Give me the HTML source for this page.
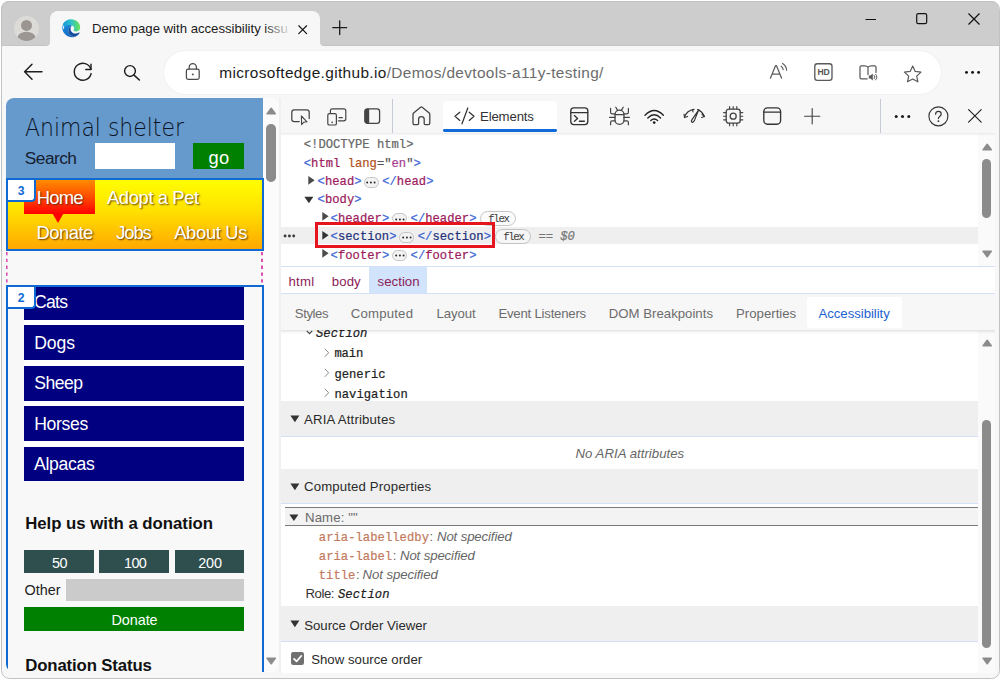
<!DOCTYPE html>
<html lang="en">
<head>
<meta charset="utf-8">
<title>Demo page with accessibility issues</title>
<style>
html,body{margin:0;padding:0;}
body{width:1000px;height:679px;overflow:hidden;background:#fff;position:relative;font-family:"Liberation Sans",sans-serif;}
.a{position:absolute;}
.t{position:absolute;white-space:pre;line-height:normal;}
svg{position:absolute;overflow:visible;}
.t.m{-webkit-text-stroke:0.22px;}
#win{position:absolute;left:1px;top:1px;width:998px;height:677px;border-radius:8px;overflow:hidden;background:#f7f7f7;}
#g{position:absolute;left:-1px;top:-1px;width:1000px;height:679px;}
#winborder{position:absolute;left:0.5px;top:0.5px;width:997px;height:676px;border-radius:8.5px;border:1.1px solid #c2c2c2;pointer-events:none;}
.ic{fill:none;stroke:#1f1f1f;stroke-width:1.3;stroke-linecap:round;stroke-linejoin:round;}
.pill{position:absolute;border:1px solid #c4c4c4;border-radius:7px;background:#f3f3f3;box-sizing:border-box;}
.hdr{position:absolute;left:281.2px;width:696.8px;background:#efefef;}
.bl{position:absolute;left:281.2px;height:1px;background:#d3e1f8;}
.navy{position:absolute;left:24px;width:220.2px;height:34.8px;background:#000080;}
.dsg{position:absolute;background:#2f4f4f;top:550.4px;height:23px;}
</style>
</head>
<body>
<div id="win"><div id="g">

<!-- ======= tab strip ======= -->
<div class="a" id="tabstrip" style="left:0;top:0;width:1000px;height:45.8px;background:#cdcdcd;box-shadow:inset 0 -1px 0 #c4c4c4;"></div>
<!-- active tab -->
<div class="a" style="left:50px;top:10.5px;width:269.5px;height:36px;background:#f7f7f7;border-radius:8px 8px 0 0;"></div>
<svg style="left:46px;top:41.8px" width="4" height="4"><path d="M4 0V4H0A4 4 0 0 0 4 0Z" fill="#f7f7f7"/></svg>
<svg style="left:319.5px;top:41.8px" width="4" height="4"><path d="M0 0V4H4A4 4 0 0 1 0 0Z" fill="#f7f7f7"/></svg>
<!-- avatar -->
<svg style="left:13.9px;top:16.1px" width="25" height="25" viewBox="0 0 25 25">
 <defs><clipPath id="avc"><circle cx="12.5" cy="12.5" r="12.5"/></clipPath></defs>
 <circle cx="12.5" cy="12.5" r="12.5" fill="#dddbd8"/>
 <g clip-path="url(#avc)"><circle cx="12.5" cy="9.4" r="5.5" fill="#9b9692"/><ellipse cx="12.5" cy="21.4" rx="8.9" ry="5.6" fill="#9b9692"/></g>
</svg>
<!-- edge logo -->
<svg style="left:62.3px;top:19.2px" width="18.4" height="18.4" viewBox="0 0 20 20">
 <defs>
  <linearGradient id="eg1" x1="0.1" y1="0.35" x2="0.95" y2="0.3"><stop offset="0" stop-color="#1e9fd8"/><stop offset="0.45" stop-color="#2fc2c9"/><stop offset="1" stop-color="#67e15a"/></linearGradient>
  <linearGradient id="eg2" x1="0.2" y1="0.2" x2="0.6" y2="1"><stop offset="0" stop-color="#1b86d9"/><stop offset="1" stop-color="#1565c0"/></linearGradient>
 </defs>
 <path d="M10 0.3C15.6 0.3 19.9 4.4 19.8 9.4C19.7 12 17.6 13.6 15 13.6C13 13.6 12.3 12.9 12.6 12.3C13.2 11.4 13.4 10.6 13.2 9.6C12.8 7.8 11.2 6.7 9.4 6.8C6.6 7 4.6 9.2 4.5 12C2 9 0.9 7 1 5.2C2.8 2.2 6.2 0.3 10 0.3Z" fill="url(#eg1)"/>
 <path d="M1 5.2C-0.6 9 0.2 13.6 3.3 16.7C6.5 19.9 11 20.6 14.3 19.2C10.5 19.4 7.2 16.6 6.9 13.2C6.7 10.4 8.4 8.2 10.6 7C7 5.8 2.6 7.6 1.6 11.4C0.9 9.4 0.6 7.2 1 5.2Z" fill="url(#eg2)"/>
 <path d="M6.9 13.2C7.2 16.6 10.5 19.4 14.3 19.2C16.4 18.4 18.1 17 19 15.4C19.3 14.9 18.8 14.5 18.4 14.8C16.2 16.3 12.6 16.2 10.6 14.2C8.9 12.5 8.6 9.6 10.6 7C8.4 8.2 6.7 10.4 6.9 13.2Z" fill="#134f9e"/>
</svg>
<!-- tab close -->
<svg style="left:298px;top:25px" width="10" height="10"><path d="M0.8 0.8L8.6 8.6M8.6 0.8L0.8 8.6" stroke="#1b1b1b" stroke-width="1.25" stroke-linecap="round" fill="none"/></svg>
<!-- new tab plus -->
<svg style="left:331.5px;top:20px" width="16" height="16"><path d="M7.7 0.8V14.6M0.8 7.7H14.6" stroke="#1b1b1b" stroke-width="1.3" stroke-linecap="round" fill="none"/></svg>
<!-- window controls -->
<svg style="left:865px;top:18px" width="12" height="3"><path d="M0.5 1.5H11" stroke="#111" stroke-width="1.15" fill="none"/></svg>
<svg style="left:915.8px;top:13px" width="12" height="12"><rect x="0.7" y="0.7" width="10" height="10" rx="1.6" fill="none" stroke="#111" stroke-width="1.2"/></svg>
<svg style="left:967.6px;top:12.8px" width="12" height="12"><path d="M0.5 0.5L11.5 11.5M11.5 0.5L0.5 11.5" stroke="#111" stroke-width="1.15" fill="none"/></svg>


<!-- ======= toolbar ======= -->
<div class="a" style="left:0;top:46px;width:1000px;height:52px;background:#f7f7f7;"></div>
<div class="a" id="omni" style="left:163.6px;top:51.2px;width:777px;height:42.4px;border-radius:21.2px;background:#fff;box-shadow:0 0 1.5px rgba(0,0,0,.10);"></div>
<!-- back -->
<svg style="left:23px;top:63px" width="20" height="18"><path d="M1.6 8.7H19M9 1.2L1.6 8.7L9 16.2" class="ic" style="stroke-width:1.45"/></svg>
<!-- refresh -->
<svg style="left:72px;top:62px" width="22" height="22"><path d="M18.9 7.2A8.5 8.5 0 1 0 19.1 11.6" class="ic" style="stroke-width:1.45"/><path d="M19 2.2V7.4H13.8" class="ic" style="stroke-width:1.45"/></svg>
<!-- search -->
<svg style="left:123px;top:64px" width="18" height="18"><circle cx="7" cy="7" r="5.4" class="ic" style="stroke-width:1.45"/><path d="M11 11.1L16.4 16" class="ic" style="stroke-width:1.55"/></svg>
<!-- lock -->
<svg style="left:185px;top:62px" width="16" height="19"><rect x="1.4" y="7.2" width="12.8" height="10.2" rx="1.8" class="ic" style="stroke:#4a4a4a;stroke-width:1.25"/><path d="M4.2 7V5.2A3.6 3.6 0 0 1 11.4 5.2V7" class="ic" style="stroke:#4a4a4a;stroke-width:1.25"/><circle cx="7.8" cy="12.4" r="0.95" fill="#4a4a4a"/></svg>
<!-- read aloud -->
<svg style="left:769px;top:62px" width="20" height="18"><path d="M1.4 16.2L6.6 3.6H7.4L12.6 16.2M3.2 12H10.8" class="ic" style="stroke:#5c5c5c;stroke-width:1.25"/><path d="M12.2 4.2A5 5 0 0 1 14.2 7.6M13.6 1.4A8.2 8.2 0 0 1 17.6 8.2" class="ic" style="stroke:#5c5c5c;stroke-width:1.15"/></svg>
<!-- HD -->
<svg style="left:813.6px;top:63px" width="19" height="18"><rect x="0.8" y="0.7" width="17.2" height="16.6" rx="2.6" class="ic" style="stroke:#5a5a5a;stroke-width:1.35"/><text x="9.4" y="12.3" text-anchor="middle" font-family='"Liberation Sans",sans-serif' font-weight="700" font-size="8.6" fill="#555" letter-spacing="-0.2">HD</text></svg>
<!-- immersive reader -->
<svg style="left:859px;top:64.5px" width="19" height="17"><path d="M9 2.2V9.6M9 2.2C8.2 1.2 7 0.8 5.6 0.8H2.4Q1 0.8 1 2.2V12.4Q1 13.8 2.4 13.8H8.2M9 2.2C9.8 1.2 11 0.8 12.4 0.8H15.6Q17 0.8 17 2.2V7.4" class="ic" style="stroke:#5a5a5a;stroke-width:1.25"/><path d="M9.8 10.6H11.4L13.8 8.6V15.6L11.4 13.6H9.8Z" fill="#5a5a5a"/><path d="M15.2 10.4A2.4 2.4 0 0 1 15.2 13.8M16.6 9.2A4.2 4.2 0 0 1 16.6 15" class="ic" style="stroke:#5a5a5a;stroke-width:1"/></svg>
<!-- star -->
<svg style="left:903px;top:64.6px" width="20" height="18"><path d="M9.7 1L12.2 6.4L18 7.1L13.7 11.1L14.9 16.8L9.7 13.9L4.5 16.8L5.7 11.1L1.4 7.1L7.2 6.4Z" class="ic" style="stroke:#5a5a5a;stroke-width:1.2"/></svg>
<!-- menu -->
<svg style="left:964px;top:69.8px" width="20" height="5"><circle cx="2.5" cy="2.4" r="1.45" fill="#111"/><circle cx="8.55" cy="2.4" r="1.45" fill="#111"/><circle cx="14.6" cy="2.4" r="1.45" fill="#111"/></svg>


<!-- ======= page ======= -->
<div class="a" id="pagewrap" style="left:6px;top:98px;width:273px;height:574px;border-radius:8px;overflow:hidden;background:#f8f8f8;">
 <div class="a" style="left:-6px;top:-98px;width:1000px;height:679px;">
  <!-- header -->
  <div class="a" style="left:262.4px;top:98px;width:16.6px;height:574px;background:#fbfbfb;"></div>
  <div class="a" style="left:6px;top:98px;width:256.5px;height:82px;background:#6699cc;"></div>
  <div class="a" style="left:95px;top:143px;width:80.3px;height:26.2px;background:#fff;"></div>
  <div class="a" style="left:193.3px;top:143.2px;width:51px;height:26.1px;background:#008000;"></div>
  <!-- nav -->
  <div class="a" style="left:6px;top:179px;width:256.6px;height:71.8px;background:linear-gradient(#ffff00 0%,#ffe000 45%,#ffa500 100%);"></div>
  <div class="a" style="left:24.4px;top:180px;width:70.8px;height:33.5px;background:linear-gradient(#ff8c00 0%,#ff4500 55%,#ff0000 100%);"></div>
  <svg style="left:48.4px;top:213px" width="20" height="11"><path d="M4.2 0H15.8L10 9.9Z" fill="#ff0000"/></svg>
  <div class="a" style="left:6px;top:178.3px;width:257.5px;height:72.3px;box-sizing:border-box;border:2.4px solid #0f6ad3;"></div>
  <div class="a" style="left:7.4px;top:180px;width:28.4px;height:22px;z-index:2;box-sizing:border-box;background:#fff;border:2px solid #0f6ad3;border-radius:0 0 4.5px 0;border-top:0;border-left-width:1px;"></div>
  <!-- dashed pink -->
  <svg style="left:6px;top:252px" width="2" height="33"><path d="M0.8 0V33" stroke="#da4fb1" stroke-width="1.6" stroke-dasharray="3.3 3.5" fill="none"/></svg>
  <svg style="left:261.4px;top:252px" width="2" height="33"><path d="M1 0V33" stroke="#da4fb1" stroke-width="2" stroke-dasharray="3.3 3.5" fill="none"/></svg>
  <!-- section -->
  <div class="a" style="left:24px;top:285px;width:220.2px;height:196.4px;background:#fff;"></div>
  <div class="navy" style="top:284.9px"></div>
  <div class="navy" style="top:325.45px"></div>
  <div class="navy" style="top:365.85px"></div>
  <div class="navy" style="top:406.3px"></div>
  <div class="navy" style="top:446.7px"></div>
  <div class="dsg" style="left:24px;width:69.8px;"></div>
  <div class="dsg" style="left:99.4px;width:69.4px;"></div>
  <div class="dsg" style="left:174.8px;width:69.4px;"></div>
  <div class="a" style="left:66.4px;top:579.2px;width:177.8px;height:21.6px;background:#cbcbcb;"></div>
  <div class="a" style="left:24px;top:607px;width:220.2px;height:23.5px;background:#008000;"></div>
  <div class="a" style="left:6px;top:284.6px;width:257.5px;height:420px;box-sizing:border-box;border:2.3px solid #0f6ad3;"></div>
  <div class="a" style="left:7.4px;top:286.6px;width:28.4px;height:22.4px;z-index:2;box-sizing:border-box;background:#fff;border:2px solid #0f6ad3;border-radius:0 0 4.5px 0;border-top:0;border-left-width:1px;"></div>
  <!-- page scrollbar -->
  <svg style="left:265.6px;top:107px" width="10.4" height="8"><path d="M5.2 0.6Q5.6 0.6 6 1.1L10 6.4Q10.4 7.4 9.4 7.6H1Q0 7.4 0.4 6.4L4.4 1.1Q4.8 0.6 5.2 0.6Z" fill="#8b8b8b"/></svg>
  <div class="a" style="left:266px;top:124px;width:9.6px;height:57.6px;border-radius:4.8px;background:#8b8b8b;"></div>
  <svg style="left:265.6px;top:657px" width="10.4" height="8"><path d="M5.2 7.4Q5.6 7.4 6 6.9L10 1.6Q10.4 0.6 9.4 0.4H1Q0 0.6 0.4 1.6L4.4 6.9Q4.8 7.4 5.2 7.4Z" fill="#8b8b8b"/></svg>
 </div>
</div>


<!-- ======= devtools ======= -->
<div class="a" id="dt" style="left:280.9px;top:98px;width:714.3px;height:574.6px;background:#fff;"></div>
<div class="a" style="left:279px;top:98px;width:2px;height:574.6px;background:#f0f0f0;"></div>
<!-- main toolbar -->
<div class="a" style="left:281px;top:98px;width:714.3px;height:35px;background:#f7f7f7;"></div>
<div class="a" style="left:392.2px;top:98.5px;width:1.1px;height:34.3px;background:#c6ccd5;"></div>
<div class="a" style="left:880px;top:98.5px;width:1.1px;height:34.3px;background:#c6ccd5;"></div>
<div class="a" style="left:442.5px;top:101px;width:114.5px;height:31px;background:#fff;border-radius:4px 4px 0 0;"></div>
<div class="a" style="left:442.5px;top:129.3px;width:114.8px;height:2.8px;background:#116ad8;border-radius:1.4px;"></div>
<!-- inspect -->
<svg style="left:290.8px;top:108.8px" width="21" height="17"><path d="M8.2 12.6H3.2Q0.8 12.6 0.8 10.2V3.2Q0.8 0.8 3.2 0.8H15.8Q18.2 0.8 18.2 3.2V9.6" class="ic" style="stroke:#444;stroke-width:1.25"/><path d="M10.4 7L10.6 15.6L12.8 13.2L16 12.8Z" class="ic" style="stroke:#444;stroke-width:1.1"/></svg>
<!-- device -->
<svg style="left:326.6px;top:107.6px" width="20" height="18"><path d="M3.4 4.4V2.8Q3.4 0.8 5.4 0.8H16.8Q18.8 0.8 18.8 2.8V10.8Q18.8 12.8 16.8 12.8H11.4" class="ic" style="stroke:#444;stroke-width:1.2"/><rect x="0.8" y="5.6" width="8.6" height="11.4" rx="1.6" class="ic" style="stroke:#444;stroke-width:1.2"/><circle cx="5.1" cy="14.4" r="0.8" fill="#444"/><path d="M12 9.6H15.4" class="ic" style="stroke:#444;stroke-width:1.1"/></svg>
<!-- dock -->
<svg style="left:364.4px;top:108.2px" width="17" height="17"><rect x="0.8" y="0.8" width="14.8" height="14.6" rx="2.6" class="ic" style="stroke:#444;stroke-width:1.3"/><path d="M0.8 3.2Q0.8 0.8 3.2 0.8H5.2V15.4H3.2Q0.8 15.4 0.8 13Z" fill="#444"/></svg>
<!-- home -->
<svg style="left:411.6px;top:105.8px" width="19" height="20"><path d="M1 8.4Q1 7.6 1.6 7.1L8.6 1.2Q9.4 0.6 10.2 1.2L17.2 7.1Q17.8 7.6 17.8 8.4V17Q17.8 18.6 16.2 18.6H13.2Q12.2 18.6 12.2 17.6V13.2Q12.2 10.6 9.4 10.6Q6.6 10.6 6.6 13.2V17.6Q6.6 18.6 5.6 18.6H2.6Q1 18.6 1 17Z" class="ic" style="stroke:#444;stroke-width:1.3"/></svg>
<!-- elements tab icon -->
<svg style="left:453.6px;top:107.4px" width="21" height="18"><path d="M5.8 5.2L1 9.3L5.8 13.4M15.2 5.2L20 9.3L15.2 13.4M13.8 1L8 16.8" class="ic" style="stroke:#333;stroke-width:1.25"/></svg>
<!-- console -->
<svg style="left:570.4px;top:106.6px" width="19" height="19"><rect x="0.8" y="0.8" width="17" height="16.8" rx="3" class="ic" style="stroke:#333;stroke-width:1.35"/><path d="M0.8 5.6H17.8" class="ic" style="stroke:#333;stroke-width:1.25"/><path d="M4.4 8.6L7.6 11.4L4.4 14.2M9.4 14.2H14.4" class="ic" style="stroke:#333;stroke-width:1.35"/></svg>
<!-- bug -->
<svg style="left:609px;top:106px" width="21" height="20"><rect x="6" y="4.2" width="9" height="14.2" rx="4.4" class="ic" style="stroke:#444;stroke-width:1.3"/><path d="M6.2 8.6H14.8" class="ic" style="stroke:#444;stroke-width:1.1"/><path d="M6.8 1.2L8.6 4.4M14.2 1.2L12.4 4.4M6 11.4H0.6M20.4 11.4H15M6 7.8H3.2Q1.6 7.8 1.6 6.2V2.4M15 7.8H17.8Q19.4 7.8 19.4 6.2V2.4M6 14.8H3.2Q1.6 14.8 1.6 16.4V18.8M15 14.8H17.8Q19.4 14.8 19.4 16.4V18.8" class="ic" style="stroke:#444;stroke-width:1.2"/></svg>
<!-- wifi -->
<svg style="left:644.4px;top:108.6px" width="21" height="16"><path d="M1 6.2Q10.2 -3.2 19.4 6.2M3.8 9Q10.2 2.6 16.6 9M6.8 11.6Q10.2 8.4 13.6 11.6" class="ic" style="stroke:#222;stroke-width:1.35"/><circle cx="10.2" cy="13.6" r="1.35" fill="#222"/></svg>
<!-- gauge -->
<svg style="left:682.8px;top:107.6px" width="23" height="17"><path d="M1.4 9.2Q4 2.4 11 1.4M14.6 1.6Q19 3 21.4 8.6" class="ic" style="stroke:#333;stroke-width:1.25"/><path d="M1 6.2L1.6 9.4L4.6 8.4M19 6.4L21.4 8.6L18.6 9.6M9.6 1.6L10 4" class="ic" style="stroke:#333;stroke-width:1.1"/><path d="M15.8 1.8Q13.4 7.2 11.4 12.6Q10.4 14.8 9 14.2Q7.8 13.4 9 11.6Q12.4 6.6 15.8 1.8Z" class="ic" style="stroke:#333;stroke-width:1.15"/></svg>
<!-- cpu -->
<svg style="left:722.8px;top:106px" width="21" height="21"><rect x="3.2" y="3.2" width="14" height="14" rx="2.6" class="ic" style="stroke:#444;stroke-width:1.3"/><circle cx="10.2" cy="10.2" r="3" class="ic" style="stroke:#444;stroke-width:1.3"/><path d="M6.6 3.2V0.6M10.2 3.2V0.6M13.8 3.2V0.6M6.6 17.2V19.8M10.2 17.2V19.8M13.8 17.2V19.8M3.2 6.6H0.6M3.2 10.2H0.6M3.2 13.8H0.6M17.2 6.6H19.8M17.2 10.2H19.8M17.2 13.8H19.8" class="ic" style="stroke:#444;stroke-width:1.15"/></svg>
<!-- application -->
<svg style="left:763px;top:107px" width="19" height="18"><rect x="0.8" y="0.8" width="16.8" height="16.4" rx="3.6" class="ic" style="stroke:#333;stroke-width:1.35"/><path d="M0.8 5.2H17.6" class="ic" style="stroke:#333;stroke-width:1.25"/></svg>
<!-- plus -->
<svg style="left:803.6px;top:108px" width="17" height="17"><path d="M8.2 0.6V15.8M0.6 8.2H15.8" class="ic" style="stroke:#444;stroke-width:1.15"/></svg>
<!-- more -->
<svg style="left:893.4px;top:113.6px" width="20" height="5"><circle cx="3.2" cy="2.4" r="1.5" fill="#1b1b1b"/><circle cx="9.5" cy="2.4" r="1.5" fill="#1b1b1b"/><circle cx="15.8" cy="2.4" r="1.5" fill="#1b1b1b"/></svg>
<!-- help -->
<svg style="left:928.4px;top:105.8px" width="21" height="21"><circle cx="10.4" cy="10.3" r="9.5" class="ic" style="stroke:#333;stroke-width:1.15"/><path d="M7.6 8.2Q7.6 5.4 10.4 5.4Q13.2 5.4 13.2 7.9Q13.2 9.4 11.6 10.4Q10.4 11.2 10.4 12.6" class="ic" style="stroke:#333;stroke-width:1.2"/><circle cx="10.4" cy="15.2" r="0.9" fill="#333"/></svg>
<!-- close -->
<svg style="left:968px;top:109.2px" width="14" height="14"><path d="M0.6 0.6L13.2 13.2M13.2 0.6L0.6 13.2" class="ic" style="stroke:#222;stroke-width:1.15"/></svg>


<!-- DOM tree -->
<div class="a" style="left:281.4px;top:227.3px;width:696.6px;height:17.2px;background:#efefef;"></div>
<!-- three dots of selected row -->
<svg style="left:283px;top:232.6px" width="14" height="6"><circle cx="2.1" cy="3" r="1.45" fill="#3a3a3a"/><circle cx="6.4" cy="3" r="1.45" fill="#3a3a3a"/><circle cx="10.7" cy="3" r="1.45" fill="#3a3a3a"/></svg>
<!-- expand triangles -->
<svg style="left:308px;top:174.5px" width="8" height="11"><path d="M0.3 0.9L6.6 5.3L0.3 9.7Z" fill="#4a4a4a"/></svg>
<svg style="left:303.6px;top:195.6px" width="10" height="8"><path d="M0.4 0.8H9.4L4.9 7.2Z" fill="#333"/></svg>
<svg style="left:322px;top:211.2px" width="8" height="11"><path d="M0.3 0.9L6.6 5.3L0.3 9.7Z" fill="#4a4a4a"/></svg>
<svg style="left:322px;top:229.8px" width="8" height="11"><path d="M0.3 0.9L6.6 5.3L0.3 9.7Z" fill="#333"/></svg>
<svg style="left:322px;top:248.2px" width="8" height="11"><path d="M0.3 0.9L6.6 5.3L0.3 9.7Z" fill="#4a4a4a"/></svg>
<!-- ellipsis pills -->
<div class="pill" style="left:363.8px;top:176.5px;width:15px;height:11px;"></div>
<svg style="left:366.4px;top:180.6px" width="10" height="3"><circle cx="1.2" cy="1.5" r="0.95" fill="#222"/><circle cx="4.9" cy="1.5" r="0.95" fill="#222"/><circle cx="8.6" cy="1.5" r="0.95" fill="#222"/></svg>
<div class="pill" style="left:392px;top:213.4px;width:15px;height:11px;"></div>
<svg style="left:394.6px;top:217.5px" width="10" height="3"><circle cx="1.2" cy="1.5" r="0.95" fill="#222"/><circle cx="4.9" cy="1.5" r="0.95" fill="#222"/><circle cx="8.6" cy="1.5" r="0.95" fill="#222"/></svg>
<div class="pill" style="left:399.2px;top:231.8px;width:15px;height:11px;"></div>
<svg style="left:401.8px;top:235.9px" width="10" height="3"><circle cx="1.2" cy="1.5" r="0.95" fill="#222"/><circle cx="4.9" cy="1.5" r="0.95" fill="#222"/><circle cx="8.6" cy="1.5" r="0.95" fill="#222"/></svg>
<div class="pill" style="left:392px;top:250.2px;width:15px;height:11px;"></div>
<svg style="left:394.6px;top:254.3px" width="10" height="3"><circle cx="1.2" cy="1.5" r="0.95" fill="#222"/><circle cx="4.9" cy="1.5" r="0.95" fill="#222"/><circle cx="8.6" cy="1.5" r="0.95" fill="#222"/></svg>
<!-- flex pills -->
<div class="pill" style="left:480.2px;top:210.5px;width:35.6px;height:15px;border-radius:7.5px;background:#fbfbfb;border-color:#c6c6c6;"></div>
<div class="pill" style="left:495.4px;top:228.6px;width:35.4px;height:15px;border-radius:7.5px;background:#f6f6f6;border-color:#c2c2c2;"></div>
<div class="a" style="left:315.2px;top:222.2px;width:179.4px;height:25.4px;box-sizing:border-box;border:3px solid #e6141f;"></div>
<!-- DOM scrollbar -->
<div class="a" style="left:978px;top:134px;width:17.3px;height:132px;background:#fafafa;"></div>
<svg style="left:981.6px;top:142.6px" width="10.4" height="8"><path d="M5.2 0.6Q5.6 0.6 6 1.1L10 6.4Q10.4 7.4 9.4 7.6H1Q0 7.4 0.4 6.4L4.4 1.1Q4.8 0.6 5.2 0.6Z" fill="#8b8b8b"/></svg>
<div class="a" style="left:981.8px;top:159.3px;width:9.4px;height:58.5px;border-radius:4.7px;background:#8b8b8b;"></div>
<svg style="left:981.6px;top:249.6px" width="10.4" height="8"><path d="M5.2 7.4Q5.6 7.4 6 6.9L10 1.6Q10.4 0.6 9.4 0.4H1Q0 0.6 0.4 1.6L4.4 6.9Q4.8 7.4 5.2 7.4Z" fill="#8b8b8b"/></svg>

<!-- breadcrumbs -->
<div class="a" style="left:281px;top:266.2px;width:714.3px;height:1px;background:#d3e1f8;"></div>
<div class="a" style="left:369.2px;top:267.2px;width:58px;height:26.6px;background:#d2e3fc;"></div>
<div class="a" style="left:281px;top:293.4px;width:714.3px;height:1px;background:#d3e1f8;"></div>

<!-- lower pane content (clipped below tab bar) -->
<div class="a" style="left:281px;top:330.4px;width:714.3px;height:342px;overflow:hidden;">
 <div class="a" style="left:-281px;top:-330.4px;width:1000px;height:679px;">
  <span class="t m" style='font-family:"Liberation Mono",monospace;font-size:12.17px;font-style:italic;color:#222;left:316px;top:326.7px;letter-spacing:0.05px;'>Section</span>
  <svg style="left:305.6px;top:330.4px" width="8" height="6"><path d="M0.8 0.8L3.5 3.7L6.2 0.8" fill="none" stroke="#444" stroke-width="1.1"/></svg>
 </div>
</div>
<svg style="left:324px;top:347.6px" width="6" height="10"><path d="M0.8 0.8L4.6 4.8L0.8 8.8" fill="none" stroke="#8a8a8a" stroke-width="1"/></svg>
<svg style="left:324px;top:367.8px" width="6" height="10"><path d="M0.8 0.8L4.6 4.8L0.8 8.8" fill="none" stroke="#8a8a8a" stroke-width="1"/></svg>
<svg style="left:324px;top:388px" width="6" height="10"><path d="M0.8 0.8L4.6 4.8L0.8 8.8" fill="none" stroke="#8a8a8a" stroke-width="1"/></svg>

<!-- section headers -->
<div class="hdr" style="top:401.4px;height:35px;"></div><div class="bl" style="top:436.2px;width:696.8px;"></div>
<svg style="left:290.2px;top:415.4px" width="10" height="8"><path d="M0.4 0.6H9.4L4.9 7.2Z" fill="#333"/></svg>
<div class="hdr" style="top:469px;height:34.4px;"></div><div class="bl" style="top:503.2px;width:696.8px;"></div>
<svg style="left:290.2px;top:482.8px" width="10" height="8"><path d="M0.4 0.6H9.4L4.9 7.2Z" fill="#333"/></svg>
<div class="hdr" style="top:606.2px;height:35.2px;"></div><div class="bl" style="top:641.4px;width:696.8px;"></div>
<svg style="left:290.2px;top:620.4px" width="10" height="8"><path d="M0.4 0.6H9.4L4.9 7.2Z" fill="#333"/></svg>
<!-- Name row -->
<div class="a" style="left:285px;top:506.6px;width:693px;height:19.2px;box-sizing:border-box;background:#f3f3f3;border-top:1.2px solid #7a7a7a;border-bottom:1.2px solid #7a7a7a;"></div>
<svg style="left:288.8px;top:513.6px" width="10" height="8"><path d="M0.4 0.6H9.4L4.9 7Z" fill="#333"/></svg>
<!-- checkbox -->
<div class="a" style="left:290.6px;top:651.8px;width:13.2px;height:13.2px;border-radius:2.2px;background:#707070;"></div>
<svg style="left:290.6px;top:651.8px" width="13.2" height="13.2"><path d="M3 6.8L5.6 9.4L10.4 3.8" fill="none" stroke="#fff" stroke-width="1.7" stroke-linecap="round" stroke-linejoin="round"/></svg>

<!-- side tab bar -->
<div class="a" style="left:281px;top:294.4px;width:714.3px;height:35.8px;background:#f7f7f7;"></div>
<div class="a" style="left:807.4px;top:297.2px;width:94.2px;height:31px;background:#fff;border-radius:3px;"></div>

<!-- lower scrollbar -->
<div class="a" style="left:978px;top:330.4px;width:17.3px;height:342.2px;background:#fafafa;"></div>
<svg style="left:981.6px;top:339.2px" width="10.4" height="8"><path d="M5.2 0.6Q5.6 0.6 6 1.1L10 6.4Q10.4 7.4 9.4 7.6H1Q0 7.4 0.4 6.4L4.4 1.1Q4.8 0.6 5.2 0.6Z" fill="#8b8b8b"/></svg>
<div class="a" style="left:981.8px;top:420.4px;width:9.4px;height:227.4px;border-radius:4.7px;background:#8b8b8b;"></div>
<svg style="left:981.6px;top:656.8px" width="10.4" height="8"><path d="M5.2 7.4Q5.6 7.4 6 6.9L10 1.6Q10.4 0.6 9.4 0.4H1Q0 0.6 0.4 1.6L4.4 6.9Q4.8 7.4 5.2 7.4Z" fill="#8b8b8b"/></svg>
<div class="a" style="left:281px;top:330.2px;width:714.3px;height:3.6px;background:linear-gradient(rgba(0,0,0,.11),rgba(0,0,0,.03) 60%,rgba(0,0,0,0));"></div>
<div class="a" style="left:281px;top:133px;width:714.3px;height:3px;background:linear-gradient(rgba(0,0,0,.09),rgba(0,0,0,.02) 60%,rgba(0,0,0,0));"></div>
<!-- bottom strip + left divider -->
<div class="a" style="left:281px;top:672.6px;width:719px;height:6px;background:#f7f7f7;"></div>


<span class="t" style='font-family:"Liberation Sans", sans-serif;font-size:13.2px;color:#1b1b1b;letter-spacing:-0.022px;left:92.00px;top:21.20px;'>Demo page with accessibility issu</span>
<span class="t" style='font-family:"Liberation Sans", sans-serif;font-size:15.4px;letter-spacing:0.356px;left:219.30px;top:63.60px;'><span style="color:#1b1b1b">microsoftedge.github.io</span><span style="color:#6b6b6b">/Demos/devtools-a11y-testing/</span></span>
<span class="t" style='font-family:"DejaVu Sans", "Liberation Sans", sans-serif;font-size:25.4px;color:#0a1322;font-weight:200;transform-origin:0 0;transform:scaleX(0.8644);left:24.60px;top:112.40px;'>Animal shelter</span>
<span class="t" style='font-family:"Liberation Sans", sans-serif;font-size:17.3px;color:#16202f;letter-spacing:-0.528px;left:24.80px;top:147.50px;'>Search</span>
<span class="t" style='font-family:"Liberation Sans", sans-serif;font-size:18.3px;color:#fff;letter-spacing:0.178px;left:208.60px;top:146.90px;'>go</span>
<span class="t" style='font-family:"Liberation Sans", sans-serif;font-size:18.4px;color:#fff;text-shadow:1px 1px 1.6px rgba(70,35,0,.85);letter-spacing:-0.741px;left:36.70px;top:186.80px;'>Home</span>
<span class="t" style='font-family:"Liberation Sans", sans-serif;font-size:18.4px;color:#fff;text-shadow:1px 1px 1.6px rgba(70,35,0,.85);letter-spacing:-0.393px;left:107.00px;top:186.80px;'>Adopt a Pet</span>
<span class="t" style='font-family:"Liberation Sans", sans-serif;font-size:18.4px;color:#fff;text-shadow:1px 1px 1.6px rgba(70,35,0,.85);letter-spacing:-0.519px;left:36.60px;top:222.00px;'>Donate</span>
<span class="t" style='font-family:"Liberation Sans", sans-serif;font-size:18.4px;color:#fff;text-shadow:1px 1px 1.6px rgba(70,35,0,.85);letter-spacing:-1.115px;left:116.20px;top:222.00px;'>Jobs</span>
<span class="t" style='font-family:"Liberation Sans", sans-serif;font-size:18.4px;color:#fff;text-shadow:1px 1px 1.6px rgba(70,35,0,.85);letter-spacing:-0.332px;left:174.20px;top:222.00px;'>About Us</span>
<span class="t" style='font-family:"Liberation Sans", sans-serif;font-size:12.2px;color:#0f6ad3;font-weight:700;z-index:3;letter-spacing:0.019px;left:17.80px;top:184.20px;'>3</span>
<span class="t" style='font-family:"Liberation Sans", sans-serif;font-size:12.2px;color:#0f6ad3;font-weight:700;z-index:3;letter-spacing:0.019px;left:17.80px;top:290.70px;'>2</span>
<span class="t" style='font-family:"Liberation Sans", sans-serif;font-size:17.6px;color:#fff;letter-spacing:-0.697px;left:34.00px;top:291.80px;'>Cats</span>
<span class="t" style='font-family:"Liberation Sans", sans-serif;font-size:17.6px;color:#fff;letter-spacing:-0.070px;left:34.20px;top:332.80px;'>Dogs</span>
<span class="t" style='font-family:"Liberation Sans", sans-serif;font-size:17.6px;color:#fff;letter-spacing:-0.535px;left:34.20px;top:373.00px;'>Sheep</span>
<span class="t" style='font-family:"Liberation Sans", sans-serif;font-size:17.6px;color:#fff;letter-spacing:-0.322px;left:34.20px;top:413.60px;'>Horses</span>
<span class="t" style='font-family:"Liberation Sans", sans-serif;font-size:17.6px;color:#fff;letter-spacing:-0.313px;left:34.00px;top:453.80px;'>Alpacas</span>
<span class="t" style='font-family:"Liberation Sans", sans-serif;font-size:16.8px;color:#111;font-weight:700;letter-spacing:-0.023px;left:25.20px;top:513.60px;'>Help us with a donation</span>
<span class="t" style='font-family:"Liberation Sans", sans-serif;font-size:14.4px;color:#fff;letter-spacing:-0.408px;left:52.00px;top:555.00px;'>50</span>
<span class="t" style='font-family:"Liberation Sans", sans-serif;font-size:14.4px;color:#fff;letter-spacing:-0.605px;left:124.00px;top:555.00px;'>100</span>
<span class="t" style='font-family:"Liberation Sans", sans-serif;font-size:14.4px;color:#fff;letter-spacing:-0.139px;left:198.20px;top:555.00px;'>200</span>
<span class="t" style='font-family:"Liberation Sans", sans-serif;font-size:14.4px;color:#222;letter-spacing:-0.000px;left:24.50px;top:581.60px;'>Other</span>
<span class="t" style='font-family:"Liberation Sans", sans-serif;font-size:14.4px;color:#fff;letter-spacing:-0.034px;left:111.40px;top:611.60px;'>Donate</span>
<span class="t" style='font-family:"Liberation Sans", sans-serif;font-size:16.8px;color:#111;font-weight:700;letter-spacing:-0.144px;left:25.20px;top:655.60px;'>Donation Status</span>
<span class="t" style='font-family:"Liberation Sans", sans-serif;font-size:13.2px;color:#333;letter-spacing:-0.148px;left:480.00px;top:109.40px;'>Elements</span>
<span class="t m" style='font-family:"Liberation Mono", monospace;font-size:12.17px;color:#666;letter-spacing:0.018px;left:303.80px;top:138.00px;'>&lt;!DOCTYPE html&gt;</span>
<span class="t m" style='font-family:"Liberation Mono", monospace;font-size:12.17px;letter-spacing:0.016px;left:303.80px;top:156.50px;'><span style="color:#4068d8">&lt;</span><span style="color:#9c1a5c">html</span> <span style="color:#b0521c">lang</span><span style="color:#555">="</span><span style="color:#a53c92">en</span><span style="color:#555">"</span><span style="color:#4068d8">&gt;</span></span>
<span class="t m" style='font-family:"Liberation Mono", monospace;font-size:12.17px;letter-spacing:0.036px;left:317.60px;top:175.00px;'><span style="color:#4068d8">&lt;</span><span style="color:#9c1a5c">head</span><span style="color:#4068d8">&gt;</span></span>
<span class="t m" style='font-family:"Liberation Mono", monospace;font-size:12.17px;letter-spacing:0.032px;left:382.20px;top:175.00px;'><span style="color:#4068d8">&lt;/</span><span style="color:#9c1a5c">head</span><span style="color:#4068d8">&gt;</span></span>
<span class="t m" style='font-family:"Liberation Mono", monospace;font-size:12.17px;letter-spacing:0.036px;left:317.60px;top:193.40px;'><span style="color:#4068d8">&lt;</span><span style="color:#9c1a5c">body</span><span style="color:#4068d8">&gt;</span></span>
<span class="t m" style='font-family:"Liberation Mono", monospace;font-size:12.17px;letter-spacing:0.028px;left:330.60px;top:211.80px;'><span style="color:#4068d8">&lt;</span><span style="color:#9c1a5c">header</span><span style="color:#4068d8">&gt;</span></span>
<span class="t m" style='font-family:"Liberation Mono", monospace;font-size:12.17px;letter-spacing:0.025px;left:410.60px;top:211.80px;'><span style="color:#4068d8">&lt;/</span><span style="color:#9c1a5c">header</span><span style="color:#4068d8">&gt;</span></span>
<span class="t m" style='font-family:"Liberation Mono", monospace;font-size:12.17px;letter-spacing:0.025px;left:330.60px;top:230.20px;'><span style="color:#3a62d0">&lt;</span><span style="color:#1f2f7a">section</span><span style="color:#3a62d0">&gt;</span></span>
<span class="t m" style='font-family:"Liberation Mono", monospace;font-size:12.17px;letter-spacing:0.023px;left:417.80px;top:230.20px;'><span style="color:#3a62d0">&lt;/</span><span style="color:#1f2f7a">section</span><span style="color:#3a62d0">&gt;</span></span>
<span class="t m" style='font-family:"Liberation Mono", monospace;font-size:12.17px;letter-spacing:0.028px;left:330.60px;top:248.60px;'><span style="color:#4068d8">&lt;</span><span style="color:#9c1a5c">footer</span><span style="color:#4068d8">&gt;</span></span>
<span class="t m" style='font-family:"Liberation Mono", monospace;font-size:12.17px;letter-spacing:0.025px;left:410.60px;top:248.60px;'><span style="color:#4068d8">&lt;/</span><span style="color:#9c1a5c">footer</span><span style="color:#4068d8">&gt;</span></span>
<span class="t m" style='font-family:"Liberation Mono", monospace;font-size:10.8px;color:#3c3c3c;-webkit-text-stroke:0;letter-spacing:-1.380px;left:488.20px;top:213.30px;'>flex</span>
<span class="t m" style='font-family:"Liberation Mono", monospace;font-size:10.8px;color:#3c3c3c;-webkit-text-stroke:0;letter-spacing:-1.480px;left:503.20px;top:231.30px;'>flex</span>
<span class="t m" style='font-family:"Liberation Mono", monospace;font-size:12.17px;color:#777;font-style:italic;letter-spacing:-0.057px;left:538.60px;top:230.20px;'>== $0</span>
<span class="t" style='font-family:"Liberation Sans", sans-serif;font-size:13.2px;color:#8c1d58;letter-spacing:0.320px;left:288.40px;top:273.60px;'>html</span>
<span class="t" style='font-family:"Liberation Sans", sans-serif;font-size:13.2px;color:#8c1d58;letter-spacing:0.098px;left:331.80px;top:273.60px;'>body</span>
<span class="t" style='font-family:"Liberation Sans", sans-serif;font-size:13.2px;color:#8c1d58;letter-spacing:0.029px;left:377.60px;top:273.60px;'>section</span>
<span class="t" style='font-family:"Liberation Sans", sans-serif;font-size:13.2px;color:#6c6c6c;letter-spacing:-0.420px;left:294.80px;top:305.60px;'>Styles</span>
<span class="t" style='font-family:"Liberation Sans", sans-serif;font-size:13.2px;color:#6c6c6c;letter-spacing:0.205px;left:350.70px;top:305.60px;'>Computed</span>
<span class="t" style='font-family:"Liberation Sans", sans-serif;font-size:13.2px;color:#6c6c6c;letter-spacing:-0.102px;left:436.60px;top:305.60px;'>Layout</span>
<span class="t" style='font-family:"Liberation Sans", sans-serif;font-size:13.2px;color:#6c6c6c;letter-spacing:-0.220px;left:498.40px;top:305.60px;'>Event Listeners</span>
<span class="t" style='font-family:"Liberation Sans", sans-serif;font-size:13.2px;color:#6c6c6c;letter-spacing:0.008px;left:608.80px;top:305.60px;'>DOM Breakpoints</span>
<span class="t" style='font-family:"Liberation Sans", sans-serif;font-size:13.2px;color:#6c6c6c;letter-spacing:0.009px;left:736.00px;top:305.60px;'>Properties</span>
<span class="t" style='font-family:"Liberation Sans", sans-serif;font-size:13.2px;color:#1b62d1;letter-spacing:-0.041px;left:818.50px;top:305.60px;'>Accessibility</span>
<span class="t m" style='font-family:"Liberation Mono", monospace;font-size:12.17px;color:#222;letter-spacing:-0.097px;left:334.40px;top:347.40px;'>main</span>
<span class="t m" style='font-family:"Liberation Mono", monospace;font-size:12.17px;color:#222;letter-spacing:0.017px;left:334.40px;top:367.60px;'>generic</span>
<span class="t m" style='font-family:"Liberation Mono", monospace;font-size:12.17px;color:#222;letter-spacing:0.045px;left:334.40px;top:387.80px;'>navigation</span>
<span class="t" style='font-family:"Liberation Sans", sans-serif;font-size:13.2px;color:#2a2a2a;letter-spacing:0.166px;left:304.00px;top:411.60px;'>ARIA Attributes</span>
<span class="t" style='font-family:"Liberation Sans", sans-serif;font-size:13.2px;color:#666;font-style:italic;letter-spacing:0.026px;left:575.50px;top:445.60px;'>No ARIA attributes</span>
<span class="t" style='font-family:"Liberation Sans", sans-serif;font-size:13.2px;color:#2a2a2a;letter-spacing:0.136px;left:304.00px;top:479.00px;'>Computed Properties</span>
<span class="t" style='font-family:"Liberation Sans", sans-serif;font-size:13.2px;color:#6a6a6a;letter-spacing:0.116px;left:305.00px;top:510.00px;'>Name: ""</span>
<span class="t m" style='font-family:"Liberation Mono", monospace;font-size:12.17px;letter-spacing:0.051px;left:318.80px;top:531.20px;'><span style="color:#c27a5e">aria-labelledby</span></span>
<span class="t" style='font-family:"Liberation Sans", sans-serif;font-size:13.2px;color:#666;letter-spacing:-1.072px;left:429.60px;top:529.20px;'>:</span>
<span class="t" style='font-family:"Liberation Sans", sans-serif;font-size:13.2px;color:#666;font-style:italic;letter-spacing:-0.126px;left:437.00px;top:529.20px;'>Not specified</span>
<span class="t m" style='font-family:"Liberation Mono", monospace;font-size:12.17px;letter-spacing:0.045px;left:318.80px;top:550.20px;'><span style="color:#c27a5e">aria-label</span></span>
<span class="t" style='font-family:"Liberation Sans", sans-serif;font-size:13.2px;color:#666;letter-spacing:-1.072px;left:392.80px;top:548.20px;'>:</span>
<span class="t" style='font-family:"Liberation Sans", sans-serif;font-size:13.2px;color:#666;font-style:italic;letter-spacing:-0.118px;left:400.00px;top:548.20px;'>Not specified</span>
<span class="t m" style='font-family:"Liberation Mono", monospace;font-size:12.17px;letter-spacing:0.023px;left:318.80px;top:569.20px;'><span style="color:#c27a5e">title</span></span>
<span class="t" style='font-family:"Liberation Sans", sans-serif;font-size:13.2px;color:#666;letter-spacing:-1.072px;left:356.00px;top:567.20px;'>:</span>
<span class="t" style='font-family:"Liberation Sans", sans-serif;font-size:13.2px;color:#666;font-style:italic;letter-spacing:-0.087px;left:362.60px;top:567.20px;'>Not specified</span>
<span class="t" style='font-family:"Liberation Sans", sans-serif;font-size:13.2px;color:#333;letter-spacing:-0.459px;left:305.50px;top:586.20px;'>Role:</span>
<span class="t m" style='font-family:"Liberation Mono", monospace;font-size:12.17px;color:#222;font-style:italic;letter-spacing:0.060px;left:338.00px;top:588.20px;'>Section</span>
<span class="t" style='font-family:"Liberation Sans", sans-serif;font-size:13.2px;color:#2a2a2a;letter-spacing:-0.006px;left:304.20px;top:617.50px;'>Source Order Viewer</span>
<span class="t" style='font-family:"Liberation Sans", sans-serif;font-size:13.2px;color:#2a2a2a;letter-spacing:0.018px;left:311.20px;top:651.80px;'>Show source order</span>
<div class="a" style="left:264px;top:18px;width:28px;height:22px;background:linear-gradient(90deg,rgba(247,247,247,0) 0%,rgba(247,247,247,.55) 55%,#f7f7f7 100%);"></div>
</div></div>
<div id="winborder"></div>
</body>
</html>
